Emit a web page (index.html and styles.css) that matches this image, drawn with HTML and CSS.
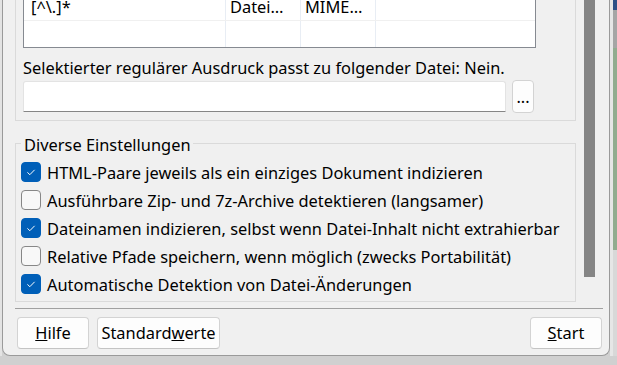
FILE: index.html
```html
<html>
<head>
    <meta charset="UTF-8">
    <meta name="viewport" content="width=device-width, initial-scale=1.0">
    <title>Index-Einstellungen</title>
    <link rel="stylesheet" href="styles.css">
</head>
<body>
    <div class="desktop">
        <div class="window">
            <div class="pane">
                <div class="groups">
                    <div class="group group-files">
                        <div class="list">
                            <div class="list-row list-row-first">
                                <div class="cell cell-pattern">[^\.]*</div>
                                <div class="cell cell-type">Datei…</div>
                                <div class="cell cell-mime">MIME…</div>
                                <div class="cell cell-rest"></div>
                            </div>
                            <div class="list-row">
                                <div class="cell cell-pattern"></div>
                                <div class="cell cell-type"></div>
                                <div class="cell cell-mime"></div>
                                <div class="cell cell-rest"></div>
                            </div>
                        </div>

                        <div class="match-label">Selektierter regulärer Ausdruck passt zu folgender Datei: Nein.</div>

                        <div class="path-row">
                            <input class="path-input" type="text">
                            <button class="browse-btn">...</button>
                        </div>
                    </div>

                    <fieldset class="group group-misc">
                        <legend>Diverse Einstellungen</legend>

                        <label class="check">
                            <span class="box checked"><svg viewBox="0 0 20 20"><path d="M6 10.4 L8.7 13 L14 7.6"/></svg></span>
                            <span class="check-text">HTML-Paare jeweils als ein einziges Dokument indizieren</span>
                        </label>
                        <label class="check">
                            <span class="box"></span>
                            <span class="check-text">Ausführbare Zip- und 7z-Archive detektieren (langsamer)</span>
                        </label>
                        <label class="check">
                            <span class="box checked"><svg viewBox="0 0 20 20"><path d="M6 10.4 L8.7 13 L14 7.6"/></svg></span>
                            <span class="check-text">Dateinamen indizieren, selbst wenn Datei-Inhalt nicht extrahierbar</span>
                        </label>
                        <label class="check">
                            <span class="box"></span>
                            <span class="check-text">Relative Pfade speichern, wenn möglich (zwecks Portabilität)</span>
                        </label>
                        <label class="check">
                            <span class="box checked"><svg viewBox="0 0 20 20"><path d="M6 10.4 L8.7 13 L14 7.6"/></svg></span>
                            <span class="check-text">Automatische Detektion von Datei-Änderungen</span>
                        </label>
                    </fieldset>
                </div>

                <div class="scrollbar">
                    <div class="thumb"></div>
                </div>
            </div>

            <div class="footer">
                <div class="footer-left">
                    <button class="btn btn-help"><u>H</u>ilfe</button>
                    <button class="btn btn-defaults">Standard<u>w</u>erte</button>
                </div>
                <button class="btn btn-start"><u>S</u>tart</button>
            </div>
        </div>

        <div class="backdrop"></div>
    </div>
</body>
</html>
```

FILE: styles.css
```css
body {
    margin: 0;
    width: 617px;
    height: 365px;
    overflow: hidden;
    background-color: #d0d0d0;
    font-family: "Noto Sans", "Segoe UI", sans-serif;
    font-size: 16.4px;
    line-height: 22px;
    color: #000;
}

.desktop {
    display: flex;
    align-items: flex-start;
    padding-left: 2px;
    background: linear-gradient(to right, #e3e3e3 2px, transparent 2px);
}

.window {
    width: 608px;
    box-sizing: border-box;
    background-color: #f0f0f0;
    border: 1px solid #9a9a9a;
    border-top: none;
    border-radius: 0 0 8px 8px;
}

.backdrop {
    width: 7px;
    height: 356px;
    background: linear-gradient(to right, #e6e6e6 3px, transparent 3px),
                linear-gradient(to bottom, #2d4f86 0, #2d4f86 10px, #a5a5a5 10px, #a5a5a5 48px, #91ac8f 48px, #91ac8f 250px, #d8d8d8 250px);
}

/* scrolled settings area */

.pane {
    display: flex;
    padding-left: 12px;
}

.groups {
    width: 561px;
}

.group {
    box-sizing: border-box;
    width: 561px;
    border: 1px solid #dadada;
}

.group-files {
    border-top: none;
    padding: 0 7px 7px 7px;
}

.list {
    width: 513px;
    height: 48px;
    box-sizing: border-box;
    overflow: hidden;
    background: #fff;
    border: 1px solid #868a91;
    border-top: none;
}

.list-row {
    display: flex;
    height: 27px;
    border-bottom: 1px solid #f0f0f0;
}

.list-row-first {
    height: 20px;
    line-height: 14px;
}

.cell {
    box-sizing: border-box;
    padding-left: 4px;
    border-right: 1px solid #e8edf4;
    white-space: nowrap;
}

.cell-pattern {
    width: 202px;
    padding-left: 7px;
}

.cell-type,
.cell-mime {
    width: 75px;
}

.cell-rest {
    flex: 1;
    border-right: none;
}

.match-label {
    margin-top: 9px;
}

.path-row {
    display: flex;
    align-items: center;
    width: 511px;
    margin-top: 1px;
}

.path-input {
    flex: 1;
    height: 31px;
    box-sizing: border-box;
    margin: 0;
    background: #fff;
    border: 1px solid #e3e3e3;
    border-bottom-color: #868686;
    border-radius: 3px 3px 0 0;
    outline: none;
}

.browse-btn {
    width: 22px;
    height: 33px;
    margin-left: 6px;
    padding: 0;
    font: inherit;
    line-height: 22px;
    color: #000;
    background: #fdfdfd;
    border: 1px solid #d3d3d3;
    border-radius: 4px;
}

.group-misc {
    margin: 11px 0 0 0;
    padding: 4px 0 3px 5px;
    min-width: 0;
}

.group-misc legend {
    padding: 4px 2px 0 3px;
    line-height: 18px;
}

.check {
    display: flex;
    align-items: center;
    height: 28px;
}

.box {
    width: 20px;
    height: 20px;
    box-sizing: border-box;
    margin-right: 6px;
    background: #f8f8f8;
    border: 1px solid #878787;
    border-radius: 4px;
}

.box.checked {
    background: #005fb8;
    border-color: #005fb8;
}

.box svg {
    display: block;
    width: 18px;
    height: 18px;
}

.box path {
    fill: none;
    stroke: #fff;
    stroke-width: 1.1;
}

.check-text {
    padding-top: 2px;
    white-space: nowrap;
}

.scrollbar {
    padding-left: 8px;
}

.thumb {
    width: 11px;
    height: 277px;
    background: #858585;
}

/* dialog buttons */

.footer {
    display: flex;
    justify-content: space-between;
    margin: 6px 6px 0 12px;
    padding: 8px 1px 6px 2px;
    border-top: 1px solid #a0a0a0;
}

.footer-left {
    display: flex;
    gap: 8px;
}

.btn {
    height: 32px;
    padding: 0;
    font: inherit;
    line-height: 22px;
    color: #000;
    background: #fdfdfd;
    border: 1px solid #d3d3d3;
    border-bottom-color: #c4c4c4;
    border-radius: 4px;
}

.btn-help,
.btn-start {
    width: 72px;
}

.btn-defaults {
    width: 123px;
}
```
